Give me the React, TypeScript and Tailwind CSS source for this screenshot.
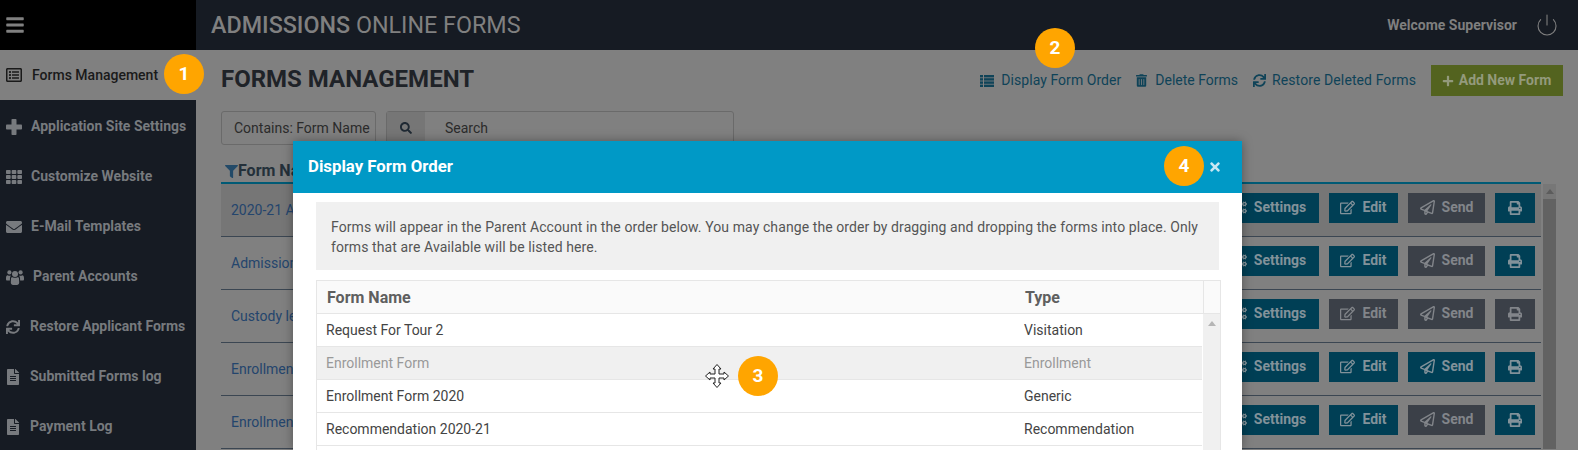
import React from "react";
import {
  FaBars, FaRegListAlt, FaTh, FaEnvelope, FaSync, FaFileAlt, FaTrashAlt, FaPlus,
  FaSearch, FaFilter, FaCogs, FaRegEdit, FaRegPaperPlane, FaPrint, FaTimes,
} from "react-icons/fa";
import { Power } from "lucide-react";

function PlusIcon({ className }: { className?: string }) {
  return (
    <svg className={className} viewBox="0 0 16 16" fill="currentColor">
      <rect x="5.5" y="0" width="5" height="16" rx="0.8" />
      <rect x="0" y="5.5" width="16" height="5" rx="0.8" />
    </svg>
  );
}

function UsersIcon({ className }: { className?: string }) {
  return (
    <svg className={className} viewBox="0 0 18 16" fill="currentColor">
      <circle cx="9" cy="5" r="3" />
      <circle cx="3.4" cy="3.4" r="2.1" />
      <circle cx="14.6" cy="3.4" r="2.1" />
      <path d="M5 9.5 C5 8.5 6 8 7 8.4 C8.2 9 9.8 9 11 8.4 C12 8 13 8.5 13 9.5 L13.2 13.5 C13.2 15 12.2 16 11 16 L7 16 C5.8 16 4.8 15 4.8 13.5 Z" />
      <path d="M0 9 C0 7 1 6 2 6.4 C2.9 6.9 3.9 7 4.8 6.6 C4.7 7.4 4.2 7.8 4 9 L3.9 11.5 L1.2 11.5 C0.4 11.5 0 11 0 10.2 Z" />
      <path d="M18 9 C18 7 17 6 16 6.4 C15.1 6.9 14.1 7 13.2 6.6 C13.3 7.4 13.8 7.8 14 9 L14.1 11.5 L16.8 11.5 C17.6 11.5 18 11 18 10.2 Z" />
    </svg>
  );
}

function ListIcon({ className }: { className?: string }) {
  return (
    <svg className={className} viewBox="0 0 14 12" fill="currentColor">
      <rect x="0" y="0" width="3" height="2.4" />
      <rect x="4" y="0" width="10" height="2.4" />
      <rect x="0" y="3.2" width="3" height="2.4" />
      <rect x="4" y="3.2" width="10" height="2.4" />
      <rect x="0" y="6.4" width="3" height="2.4" />
      <rect x="4" y="6.4" width="10" height="2.4" />
      <rect x="0" y="9.6" width="3" height="2.4" />
      <rect x="4" y="9.6" width="10" height="2.4" />
    </svg>
  );
}

const nav = [
  { label: "Forms Management", Icon: FaRegListAlt, gap: "gap-[10px]", size: "w-[16px] h-[16px]", active: true },
  { label: "Application Site Settings", Icon: PlusIcon, gap: "gap-[9px]", size: "w-[16px] h-[16px]" },
  { label: "Customize Website", Icon: FaTh, gap: "gap-[9px]", size: "w-[16px] h-[16px]" },
  { label: "E-Mail Templates", Icon: FaEnvelope, gap: "gap-[9px]", size: "w-[16px] h-[16px]" },
  { label: "Parent Accounts", Icon: UsersIcon, gap: "gap-[9px]", size: "w-[18px] h-[16px]" },
  { label: "Restore Applicant Forms", Icon: FaSync, gap: "gap-[10px]", size: "w-[14px] h-[14px]" },
  { label: "Submitted Forms log", Icon: FaFileAlt, gap: "gap-[10px]", size: "w-[14px] h-[16px]" },
  { label: "Payment Log", Icon: FaFileAlt, gap: "gap-[10px]", size: "w-[14px] h-[16px]" },
];

const rows = [
  { name: "2020-21 Application", edit: true, send: false, print: true, first: true },
  { name: "Admission Form", edit: true, send: false, print: true },
  { name: "Custody letter", edit: false, send: false, print: false },
  { name: "Enrollment Form", edit: true, send: true, print: true },
  { name: "Enrollment Form 2020", edit: true, send: false, print: true },
];

const orderRows = [
  { name: "Request For Tour 2", type: "Visitation" },
  { name: "Enrollment Form", type: "Enrollment", muted: true },
  { name: "Enrollment Form 2020", type: "Generic" },
  { name: "Recommendation 2020-21", type: "Recommendation" },
  { name: "", type: "" },
];

function Badge({ n, className }: { n: number; className: string }) {
  return (
    <div className={`absolute z-30 flex h-[40px] w-[40px] items-center justify-center rounded-full bg-[#ffa500] text-[19px] font-bold text-white ${className}`}>
      {n}
    </div>
  );
}

function RowButton({ on, className, children }: { on: boolean; className: string; children: React.ReactNode }) {
  return (
    <div className={`flex h-[30px] items-center justify-center gap-[7px] text-[14px] font-bold ${on ? "bg-[#003f55] text-[#82929a]" : "bg-[#3b4048] text-[#82858a]"} ${className}`}>
      {children}
    </div>
  );
}

export default function App() {
  return (
    <div className="relative flex h-[450px] w-full flex-col overflow-hidden bg-[#808080] font-['Roboto',sans-serif]">
      <header className="flex h-[50px] shrink-0 items-center bg-[#161b23]">
        <div className="flex h-full w-[196px] shrink-0 items-center bg-black pl-[6px]">
          <FaBars className="h-[20px] w-[18px] text-[#808080]" />
        </div>
        <div className="ml-[15px] text-[23.3px] text-[#808080]">
          <span className="font-medium">ADMISSIONS</span> ONLINE FORMS
        </div>
        <div className="ml-auto mr-[19px] flex items-center gap-[18px]">
          <span className="text-[14px] font-bold text-[#7f7f7f]">Welcome Supervisor</span>
          <Power className="h-[24px] w-[24px] text-[#7f7f7f]" strokeWidth={1.1} />
        </div>
      </header>

      <div className="flex min-h-0 flex-1">
        <aside className="w-[196px] shrink-0 bg-[#161b23]">
          {nav.map(({ label, Icon, gap, size, active }) => (
            <div
              key={label}
              className={`flex h-[50px] items-center pl-[6px] text-[14px] ${gap} ${active ? "bg-[#808080] font-medium text-[#1a1a1a]" : "pt-[3px] font-bold text-[#777a7e]"}`}
            >
              <Icon className={`shrink-0 ${size}`} />
              <span>{label}</span>
            </div>
          ))}
        </aside>

        <main className="min-w-0 flex-1 pl-[25px] pt-[15px]">
          <div className="flex h-[31px] items-center pr-[15px]">
            <h1 className="mb-[3px] text-[24px] font-bold text-[#1f2328]">FORMS MANAGEMENT</h1>
            <div className="ml-auto flex items-center text-[14px] text-[#0f4358]">
              <ListIcon className="mr-[7px] h-[12px] w-[14px]" />
              <span className="tracking-[0.05px]">Display Form Order</span>
              <FaTrashAlt className="ml-[15px] mr-[8px] h-[13px] w-[11px]" />
              <span>Delete Forms</span>
              <FaSync className="ml-[15px] mr-[6px] h-[13px] w-[13px]" />
              <span className="tracking-[0.1px]">Restore Deleted Forms</span>
            </div>
            <div className="ml-[15px] flex h-[31px] w-[132px] items-center justify-center gap-[5px] bg-[#53631f] pr-[1px] text-[14px] font-bold text-[#939a7c]">
              <FaPlus className="h-[12px] w-[12px]" />
              <span>Add New Form</span>
            </div>
          </div>

          <div className="mt-[15px] flex h-[34px] gap-[10px] text-[14px] text-[#2b2b2b]">
            <div className="flex w-[155px] items-center rounded-[3px] border border-[#6a6a6a] pl-[12px]">Contains: Form Name</div>
            <div className="flex w-[348px] rounded-[3px] border border-[#6a6a6a]">
              <div className="flex w-[38px] items-center justify-center bg-[#767676]">
                <FaSearch className="h-[12px] w-[12px] text-[#1f2933]" />
              </div>
              <div className="flex items-center pl-[20px]">Search</div>
            </div>
          </div>

          <div className="mt-[14px] flex">
            <div className="min-w-0 flex-1">
              <div className="flex h-[25px] items-center border-b-2 border-[#005a75] pl-[4px] pt-[1px] text-[16px] font-bold text-[#24303a]">
                <FaFilter className="h-[13px] w-[13px] text-[#234a68]" />
                <span>Form Name</span>
              </div>
              {rows.map((r) => (
                <div
                  key={r.name}
                  className={`flex h-[53px] items-center justify-between border-b border-[#3b4652] pl-[10px] pr-[6px] text-[14px] text-[#24456d] ${r.first ? "bg-[#767676]" : ""}`}
                >
                  <span>{r.name}</span>
                  <div className="mb-[5px] flex gap-[10px]">
                    <RowButton on className="w-[100px]"><FaCogs className="h-[15px] w-[15px]" />Settings</RowButton>
                    <RowButton on={r.edit} className="w-[69px]"><FaRegEdit className="h-[15px] w-[15px]" />Edit</RowButton>
                    <RowButton on={r.send} className="w-[77px]"><FaRegPaperPlane className="h-[15px] w-[15px]" />Send</RowButton>
                    <RowButton on={r.print} className="w-[40px]"><FaPrint className="h-[14px] w-[14px]" /></RowButton>
                  </div>
                </div>
              ))}
            </div>
            <div className="ml-[2px] mr-[22px] mt-[25px] flex w-[13px] shrink-0 flex-col items-center bg-[#777777]">
              <div className="mt-[5px] h-0 w-0 border-x-[4px] border-b-[5px] border-x-transparent border-b-[#5c5c5c]" />
              <div className="mt-[5px] w-full flex-1 bg-[#626262]" />
            </div>
          </div>
        </main>
      </div>

      <section className="absolute left-[293px] top-[141px] z-20 h-[309px] w-[949px] overflow-hidden bg-white shadow-[0_0_10px_rgba(0,0,0,0.35)]">
        <div className="flex h-[52px] items-center justify-between bg-[#0099c6] pl-[15px] pr-[20px]">
          <h2 className="text-[16.8px] font-bold text-white">Display Form Order</h2>
          <FaTimes className="h-[14px] w-[14px] text-[#c8e8f3]" />
        </div>
        <div className="pl-[23px] pr-[21px] pt-[9px]">
          <div className="mr-[2px] h-[68px] bg-[#f0f0f0] px-[15px] pt-[15px] text-[14px] leading-[20px] tracking-[0.09px] text-[#555]">
            Forms will appear in the Parent Account in the order below. You may change the order by dragging and dropping the forms into place. Only forms that are Available will be listed here.
          </div>
          <div className="mt-[10px] border-x border-t border-[#e6e6e6]">
            <div className="flex h-[33px] border-b border-[#e6e6e6] bg-[#fafafa] pt-[2px] text-[16px] font-bold text-[#5f5f5f]">
              <div className="flex w-[708px] items-center pl-[10px]">Form Name</div>
              <div className="flex flex-1 items-center">Type</div>
              <div className="-mt-[2px] w-[17px] border-l border-[#e6e6e6]" />
            </div>
            <div className="flex">
              <div className="min-w-0 flex-1">
                {orderRows.map((r, i) => (
                  <div
                    key={i}
                    className={`flex h-[33px] items-center border-b border-[#e6e6e6] text-[14px] ${r.muted ? "bg-[#f0f0f0] text-[#999]" : "text-[#444]"}`}
                  >
                    <div className="w-[708px] pl-[9px]">{r.name}</div>
                    <div className="-ml-[1px]">{r.type}</div>
                  </div>
                ))}
              </div>
              <div className="ml-[1px] flex w-[17px] shrink-0 justify-center bg-[#f0f0f0] pt-[7px]">
                <div className="h-0 w-0 border-x-[4px] border-b-[5px] border-x-transparent border-b-[#b5b5b5]" />
              </div>
            </div>
          </div>
        </div>
      </section>

      <Badge n={1} className="left-[164px] top-[54px]" />
      <Badge n={2} className="left-[1035px] top-[28px]" />
      <Badge n={3} className="left-[738px] top-[356px]" />
      <Badge n={4} className="left-[1164px] top-[146px]" />

      <svg className="absolute left-[705px] top-[364px] z-30" width="24" height="24" viewBox="0 0 24 24">
        <path
          d="M12 0.5 L16 5 L14 5 L14 10 L19 10 L19 8 L23.5 12 L19 16 L19 14 L14 14 L14 19 L16 19 L12 23.5 L8 19 L10 19 L10 14 L5 14 L5 16 L0.5 12 L5 8 L5 10 L10 10 L10 5 L8 5 Z"
          fill="#fff"
          stroke="#222"
          strokeWidth="1"
          strokeLinejoin="miter"
        />
      </svg>
    </div>
  );
}
